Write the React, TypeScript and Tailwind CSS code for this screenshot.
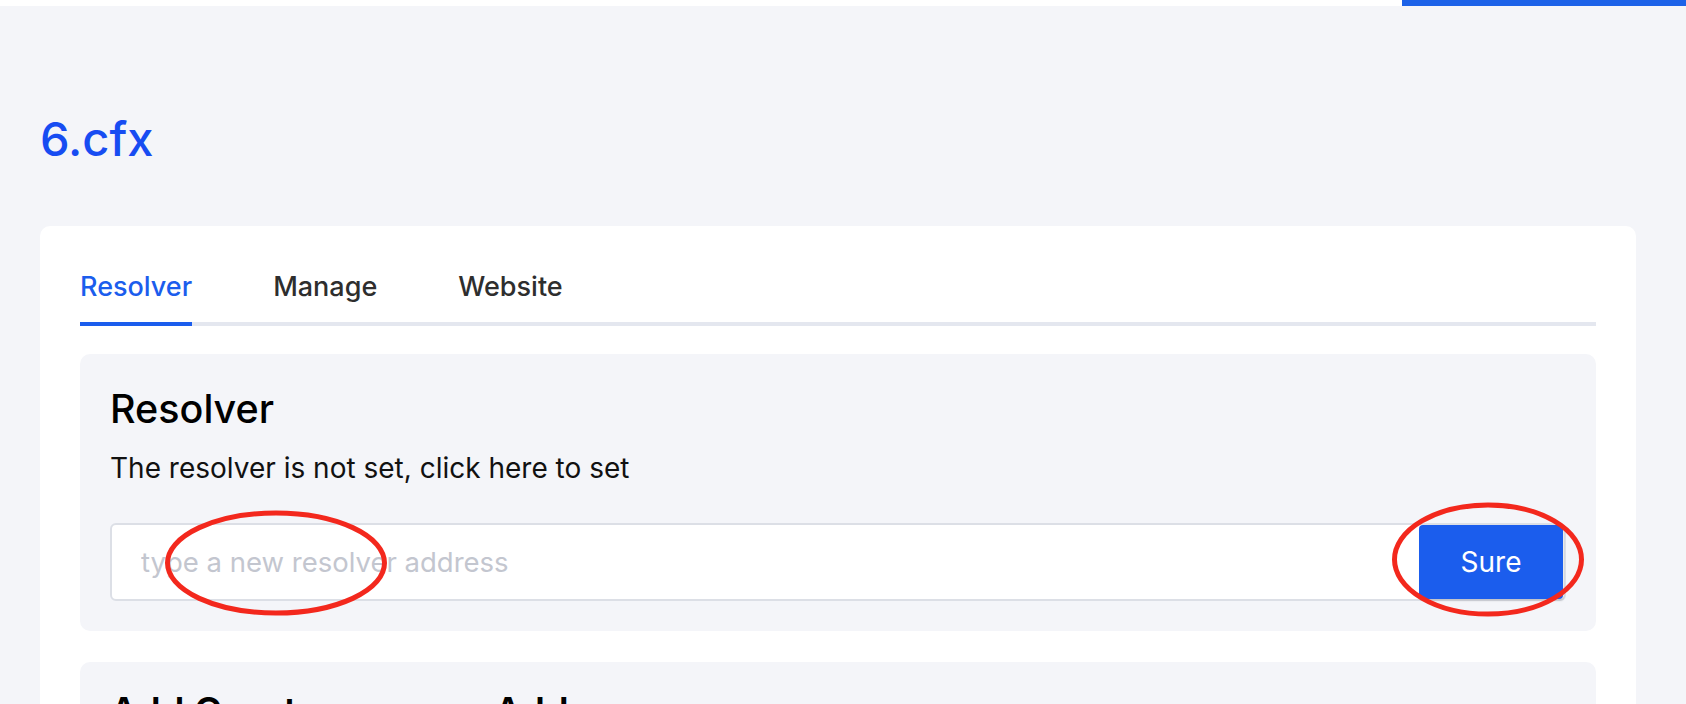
import { useState } from "react"

const tabs = ["Resolver", "Manage", "Website"]

function Marks() {
    // red hand-drawn style circles from the screenshot
    return (
        <svg
            className="pointer-events-none absolute left-0 top-0"
            width="1686"
            height="704"
            viewBox="0 0 1686 704"
        >
            <ellipse cx="276" cy="563" rx="108.5" ry="50" fill="none" stroke="#f3281d" strokeWidth="5" />
            <ellipse cx="1488" cy="559.5" rx="93.5" ry="54.5" fill="none" stroke="#f3281d" strokeWidth="5" />
        </svg>
    )
}

export default function App() {

    const [active, setActive] = useState("Resolver")

    return (
        <div
            className="relative min-h-[704px] overflow-hidden bg-[#f4f5f9]"
            style={{ fontFamily: "Inter, 'Liberation Sans', sans-serif" }}
        >

            <div className="flex h-[6px]">
                <div className="flex-1 bg-white" />
                <div className="w-[284px] bg-[#1c62e8]" />
            </div>

            <h1 className="ml-[40px] mt-[105px] text-[47px] leading-[56px] font-medium text-[#174cf2]">
                6.cfx
            </h1>

            <div className="ml-[40px] mr-[50px] mt-[59px] rounded-[10px] bg-white px-[40px] pt-[44px] pb-[40px]">

                <div className="flex gap-[81px] border-b-4 border-[#e4e7ef]">
                    {tabs.map((tab) => (
                        <button
                            key={tab}
                            onClick={() => setActive(tab)}
                            className={
                                active === tab
                                    ? "-mb-[4px] border-b-4 border-[#1b5ded] pb-[18px] text-[27px] leading-[34px] font-medium text-[#1b5ded]"
                                    : "-mb-[4px] border-b-4 border-transparent pb-[18px] text-[27px] leading-[34px] font-medium text-[#2e2e2e]"
                            }
                        >
                            {tab}
                        </button>
                    ))}
                </div>

                <section className="mt-[28px] rounded-[10px] bg-[#f4f5f9] px-[30px] pt-[32px] pb-[30px]">

                    <h2 className="text-[39.5px] leading-[46px] font-medium text-black">
                        Resolver
                    </h2>

                    <p className="mt-[19px] text-[28px] leading-[34px] text-[#111]">
                        The resolver is not set, click here to set
                    </p>

                    <div className="mt-[38px] flex h-[78px] items-center rounded-[6px] border-2 border-[#dcdfe6] bg-white">
                        <input
                            className="h-full flex-1 bg-transparent px-[29px] text-[27.5px] text-[#333] outline-none placeholder:text-[#c3c6cf]"
                            placeholder="type a new resolver address"
                        />
                        <button className="mr-[1px] h-[74px] w-[144px] rounded-[4px] bg-[#1b5ded] text-[28px] text-white shadow-[1px_2px_2px_rgba(0,0,0,0.12)]">
                            Sure
                        </button>
                    </div>

                </section>

                <section className="mt-[31px] rounded-[10px] bg-[#f4f5f9] px-[30px] pt-[26px] pb-[30px]">
                    <h2 className="text-[38px] leading-[46px] font-semibold text-black">
                        Add Cryptocurrency Address
                    </h2>
                    <p className="mt-[19px] text-[28px] leading-[34px] text-[#111]">
                        No address has been added yet
                    </p>
                </section>

            </div>

            <Marks />

        </div>
    )
}
